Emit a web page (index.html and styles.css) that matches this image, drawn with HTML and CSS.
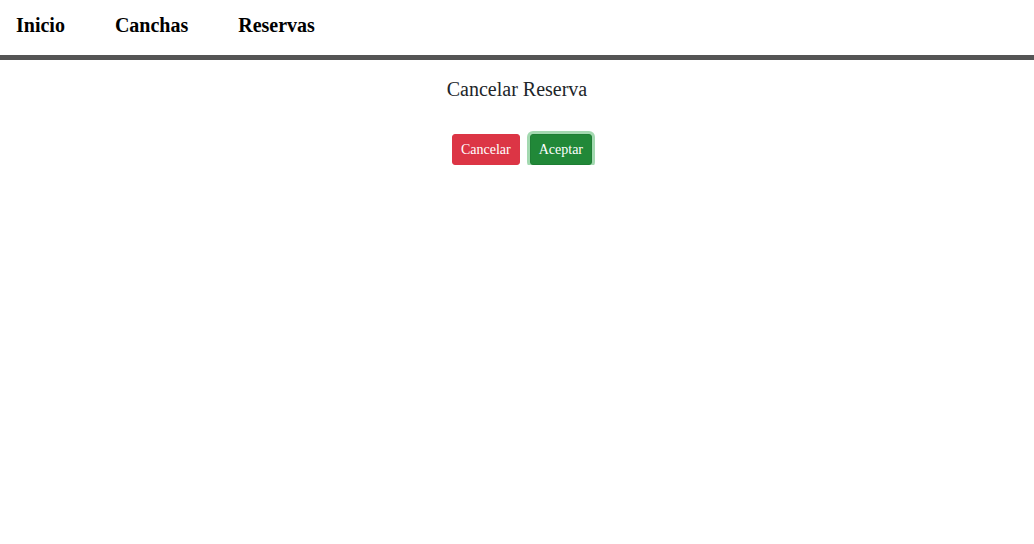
FILE: index.html
```html
<!DOCTYPE html>
<html lang="es">
<head>
<meta charset="utf-8">
<title>Cancelar Reserva</title>
<link rel="stylesheet" href="styles.css">
</head>
<body>
<nav class="nav">
  <a class="nav-link" href="#">Inicio</a>
  <a class="nav-link" href="#">Canchas</a>
  <a class="nav-link" href="#">Reservas</a>
</nav>
<main class="content">
  <h2 class="title">Cancelar Reserva</h2>
  <div class="actions">
    <button class="btn btn-danger" type="button">Cancelar</button>
    <button class="btn btn-success btn-focus" type="button">Aceptar</button>
  </div>
</main>
</body>
</html>
```
FILE: styles.css
```css
html, body {
  margin: 0;
  padding: 0;
  background: #fff;
  font-family: "Liberation Serif", "Times New Roman", serif;
}

.nav {
  display: flex;
  align-items: center;
  gap: 50px;
  height: 50px;
  padding: 0 0 5px 16px;
  border-bottom: 5px solid #555;
}

.nav-link {
  font-size: 20px;
  font-weight: bold;
  color: #000;
  text-decoration: none;
}

.content {
  display: flex;
  flex-direction: column;
  align-items: center;
}

.title {
  margin: 17px 0 0;
  font-size: 20px;
  font-weight: normal;
  line-height: 24px;
  color: #212529;
}

.actions {
  display: flex;
  gap: 10px;
  margin-top: 33px;
  padding-left: 10px;
}

.btn {
  font-family: "Liberation Serif", "Times New Roman", serif;
  font-size: 14px;
  line-height: 21px;
  padding: 4px 8px;
  border: 1px solid transparent;
  border-radius: 3px;
  color: #fff;
  cursor: pointer;
}

.btn-danger {
  background: #dc3545;
  border-color: #dc3545;
}

.btn-success {
  background: #28a745;
  border-color: #28a745;
}

.btn-focus {
  background: #218838;
  border-color: #1e7e34;
  box-shadow: 0 0 0 3px rgba(72, 180, 97, 0.5);
}
```
